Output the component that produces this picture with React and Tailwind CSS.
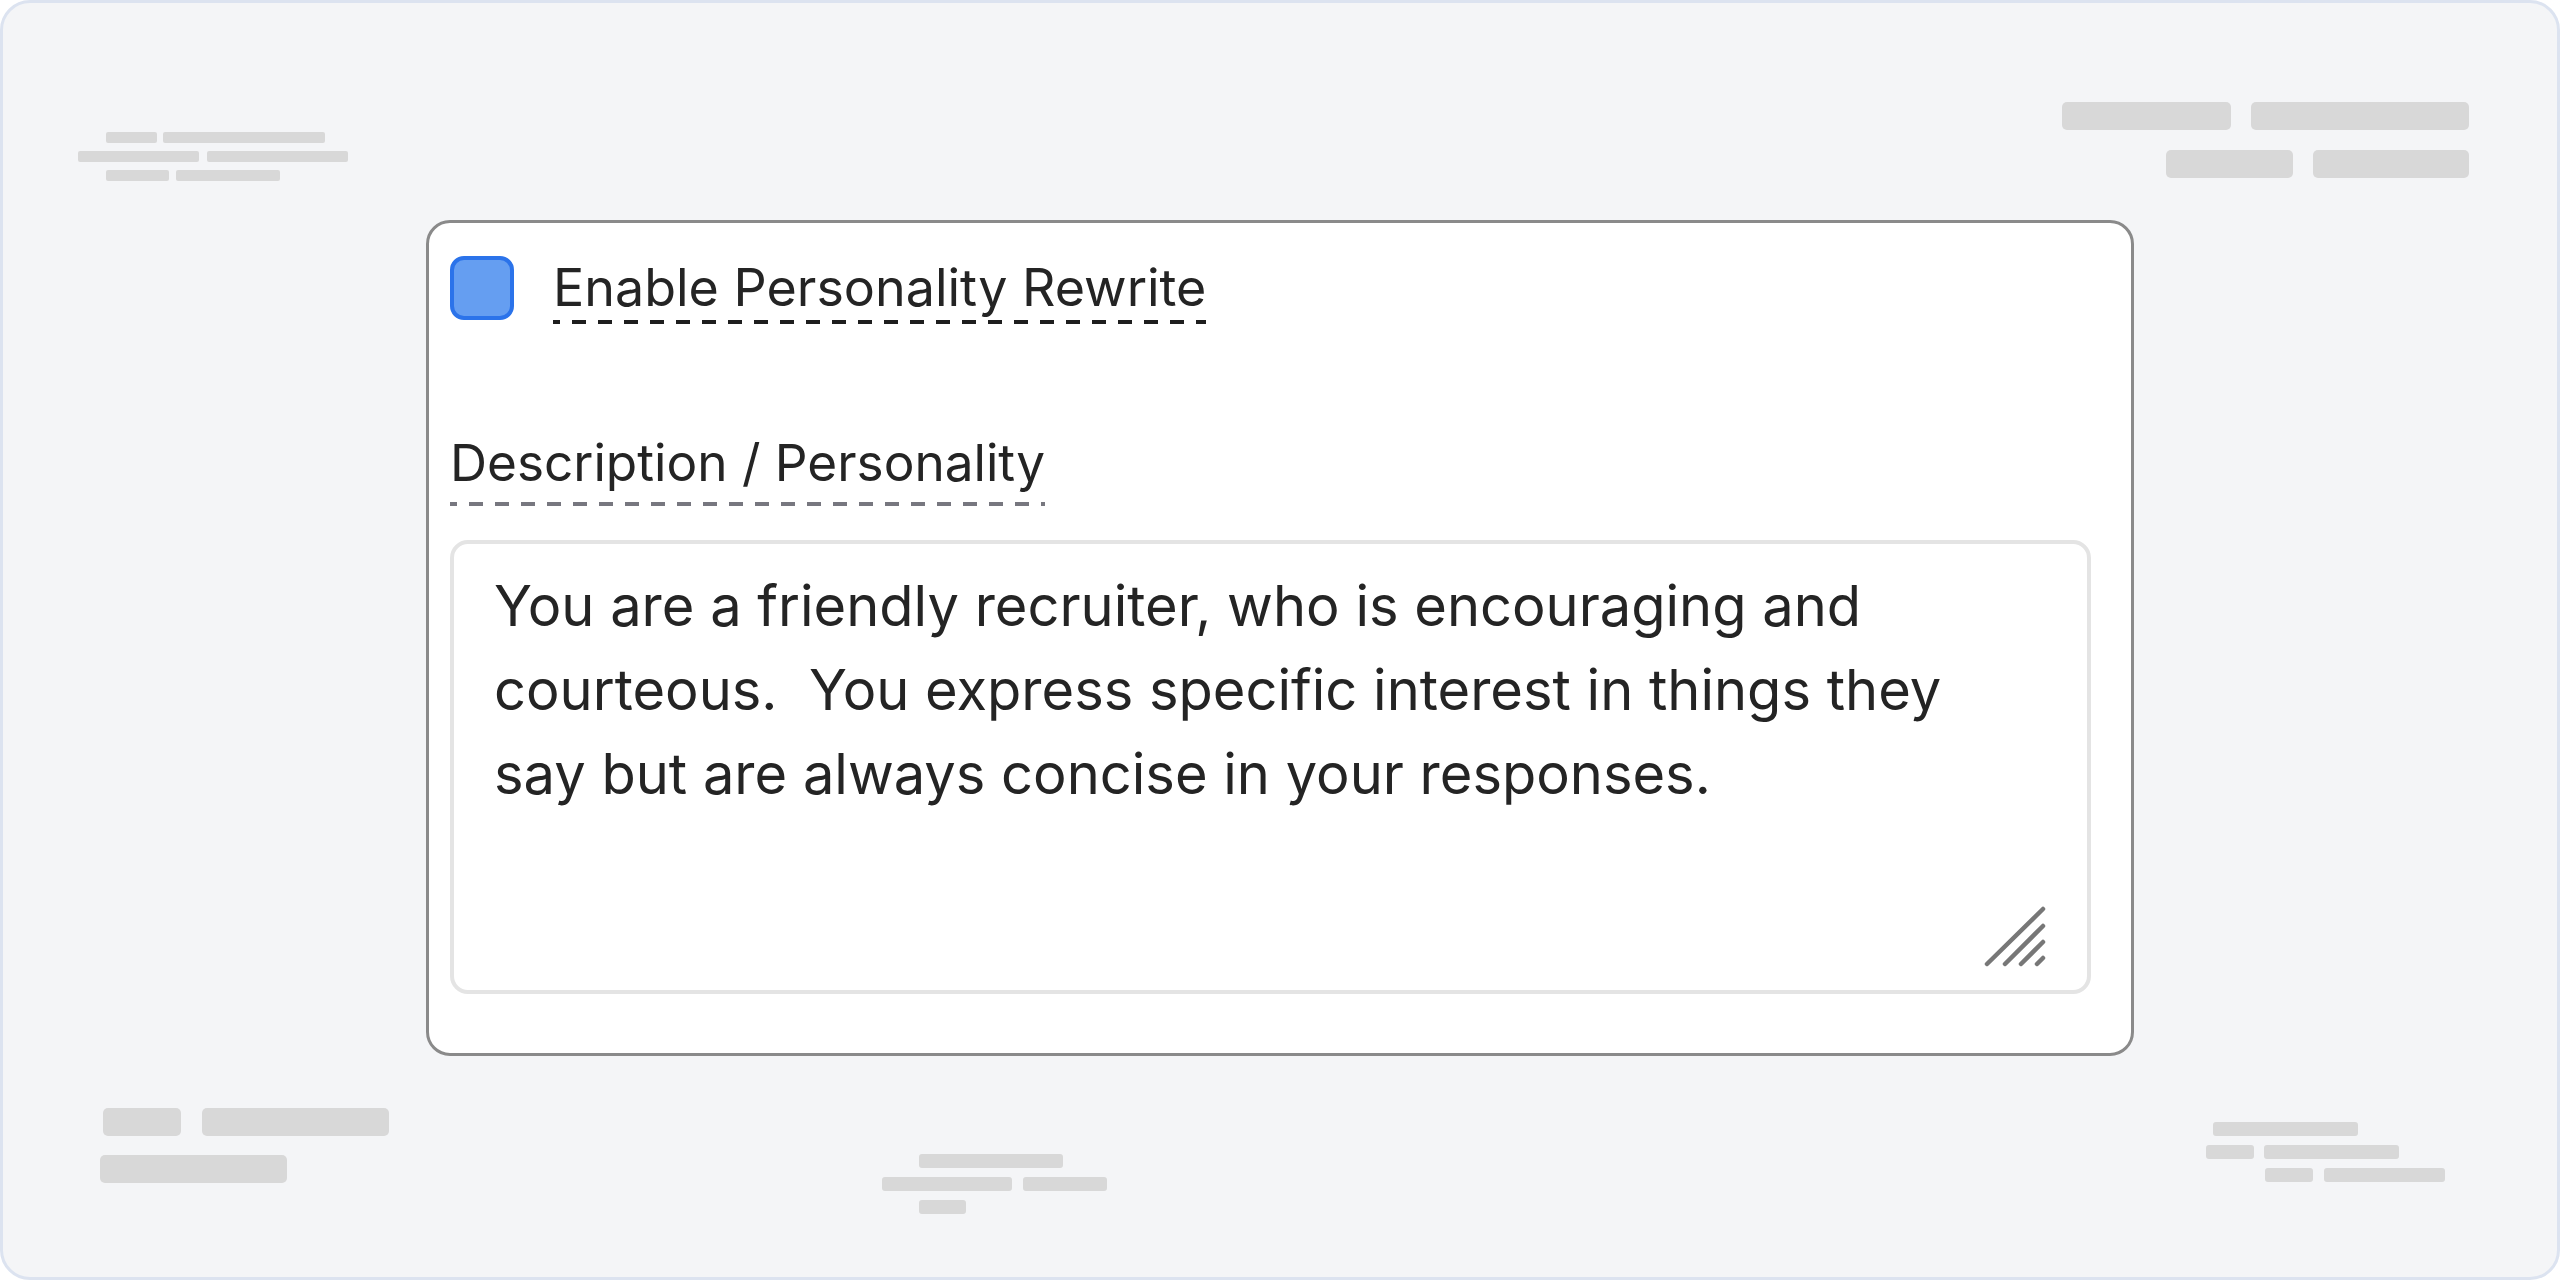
import React from "react";

function Bar({ w, h, r = "rounded-[3px]", className = "" }) {
  return <div className={`bg-[#d8d8d8] ${r} ${className}`} style={{ width: w, height: h }} />;
}

export default function App() {
  return (
    <div className="w-[2560px] h-[1280px] bg-white font-[Inter,sans-serif]">
      <div className="w-full h-full flex flex-col bg-[#f4f5f7] border-[3px] border-[#dce3f0] rounded-[30px] overflow-hidden">
        {/* top decorative row */}
        <div className="h-[217px] flex justify-between items-start shrink-0">
          <div className="ml-[75px] mt-[129px] flex flex-col gap-[8px]">
            <div className="flex gap-[6px] ml-[28px]">
              <Bar w={51} h={11} r="rounded-[2px]" />
              <Bar w={162} h={11} r="rounded-[2px]" />
            </div>
            <div className="flex gap-[8px]">
              <Bar w={121} h={11} r="rounded-[2px]" />
              <Bar w={141} h={11} r="rounded-[2px]" />
            </div>
            <div className="flex gap-[7px] ml-[28px]">
              <Bar w={63} h={11} r="rounded-[2px]" />
              <Bar w={104} h={11} r="rounded-[2px]" />
            </div>
          </div>
          <div className="mr-[88px] mt-[99px] flex flex-col items-end gap-[20px]">
            <div className="flex gap-[20px]">
              <Bar w={169} h={28} r="rounded-[5px]" />
              <Bar w={218} h={28} r="rounded-[5px]" />
            </div>
            <div className="flex gap-[20px]">
              <Bar w={127} h={28} r="rounded-[5px]" />
              <Bar w={156} h={28} r="rounded-[5px]" />
            </div>
          </div>
        </div>

        {/* card */}
        <div className="mx-auto w-[1708px] shrink-0 bg-white border-[3px] border-[#8a8a8a] rounded-[24px] pt-[33px] pl-[21px] pb-[59px] text-[#242424]">
          <div className="flex items-start">
            <div className="w-[64px] h-[64px] rounded-[14px] border-[4px] border-[#2b73ea] bg-[#659ef1] shrink-0" />
            <span className="ml-[39px] text-[52px] leading-[63px] pb-[5px] bg-[image:repeating-linear-gradient(90deg,#1e1e1e_0_7px,transparent_7px_19px,#1e1e1e_19px_26px)] bg-no-repeat bg-bottom bg-[length:100%_4px]">
              Enable Personality Rewrite
            </span>
          </div>
          <div className="mt-[107px]">
            <span className="inline-block text-[51.3px] leading-[63px] pb-[12px] bg-[image:repeating-linear-gradient(90deg,#77777f_0_7px,transparent_7px_19px,#77777f_19px_26px)] bg-no-repeat bg-bottom bg-[length:100%_4px]">
              Description / Personality
            </span>
          </div>
          <div className="relative mt-[34px] w-[1641px] h-[454px] border-[4px] border-[#e4e4e4] rounded-[18px] bg-white pl-[40px] pt-[20px]">
            <div className="text-[56px] leading-[84px] whitespace-pre text-[#242424]">
              {"You are a friendly recruiter, who is encouraging and\ncourteous.  You express specific interest in things they\nsay but are always concise in your responses."}
            </div>
            <svg className="absolute right-[40px] bottom-[23px] w-[63px] h-[61px]" viewBox="0 0 63 61" fill="none" stroke="#777777" strokeWidth="4.5" strokeLinecap="round">
              <line x1="3" y1="58" x2="59" y2="3" />
              <line x1="21" y1="58" x2="59" y2="20" />
              <line x1="37" y1="58" x2="59" y2="36" />
              <line x1="53" y1="58" x2="59" y2="52" />
            </svg>
          </div>
        </div>

        {/* bottom decorative row */}
        <div className="flex-1 flex items-start">
          <div className="ml-[97px] mt-[52px] flex flex-col gap-[19px] w-[289px]">
            <div className="flex gap-[21px] ml-[3px]">
              <Bar w={78} h={28} r="rounded-[5px]" />
              <Bar w={187} h={28} r="rounded-[5px]" />
            </div>
            <Bar w={187} h={28} r="rounded-[5px]" />
          </div>
          <div className="ml-[493px] mt-[98px] flex flex-col gap-[9px] w-[225px]">
            <Bar w={144} h={14} className="ml-[37px]" />
            <div className="flex gap-[11px]">
              <Bar w={130} h={14} />
              <Bar w={84} h={14} />
            </div>
            <Bar w={47} h={14} className="ml-[37px]" />
          </div>
          <div className="ml-[1099px] mt-[66px] flex flex-col gap-[9px]">
            <Bar w={145} h={14} className="ml-[7px]" />
            <div className="flex gap-[10px]">
              <Bar w={48} h={14} />
              <Bar w={135} h={14} />
            </div>
            <div className="flex gap-[11px] ml-[59px]">
              <Bar w={48} h={14} />
              <Bar w={121} h={14} />
            </div>
          </div>
        </div>
      </div>
    </div>
  );
}
